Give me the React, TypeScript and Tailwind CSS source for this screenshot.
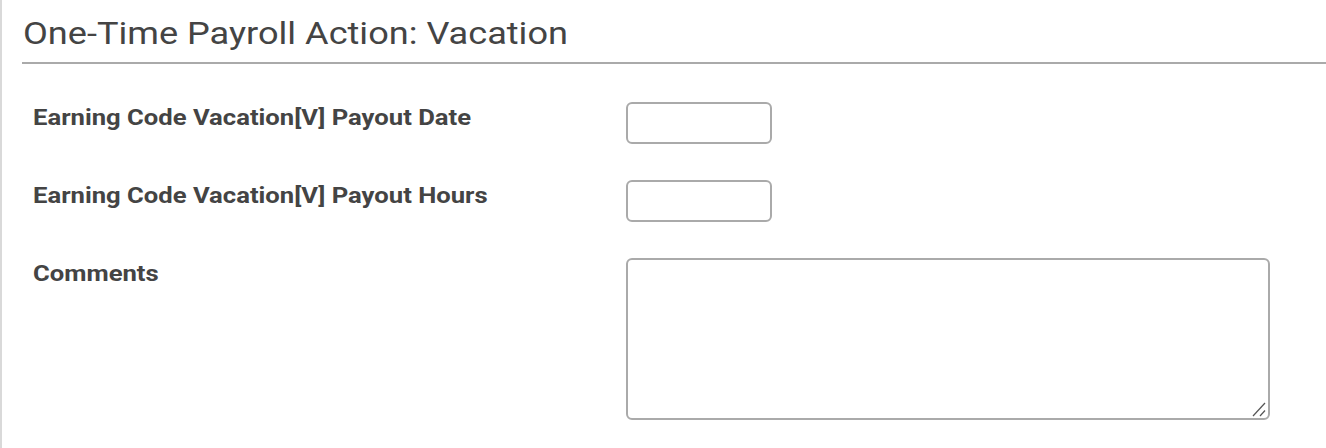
const stretch = "inline-block origin-left scale-x-[1.165] whitespace-nowrap";

function Field({ label, children }: { label: string; children: React.ReactNode }) {
  return (
    <div className="flex items-start min-h-[78px]">
      <label className="w-[593px] shrink-0 text-[22px] leading-[26px] font-bold pt-[3px]">
        <span className={stretch}>{label}</span>
      </label>
      {children}
    </div>
  );
}

export default function App() {
  return (
    <div className="h-[448px] w-[1326px] overflow-hidden bg-white border-l-2 border-[#d9d9d9] font-['Roboto',sans-serif] text-[#444]">
      <div className="pl-5 pt-[14px]">
        <h1 className="text-[31px] leading-[40px] pl-[1px] pb-[8px] border-b-2 border-[#aaa]">
          <span className={stretch}>One-Time Payroll Action: Vacation</span>
        </h1>
        <div className="pl-[11px] pt-[38px] flex flex-col">
          <Field label="Earning Code Vacation[V] Payout Date">
            <input type="text" className="w-[146px] h-[42px] rounded-md border-2 border-[#aaa] outline-none" />
          </Field>
          <Field label="Earning Code Vacation[V] Payout Hours">
            <input type="text" className="w-[146px] h-[42px] rounded-md border-2 border-[#aaa] outline-none" />
          </Field>
          <Field label="Comments">
            <div className="relative">
              <textarea className="block w-[644px] h-[162px] rounded-md border-2 border-[#aaa] outline-none resize-none" />
              {/* resize grip */}
              <svg className="absolute right-[4px] bottom-[3px] pointer-events-none" width="14" height="15" viewBox="0 0 14 15">
                <line x1="1" y1="14" x2="13" y2="1" stroke="#555" strokeWidth="1.2" />
                <line x1="8" y1="14" x2="13" y2="8.5" stroke="#555" strokeWidth="1.2" />
              </svg>
            </div>
          </Field>
        </div>
      </div>
    </div>
  );
}
